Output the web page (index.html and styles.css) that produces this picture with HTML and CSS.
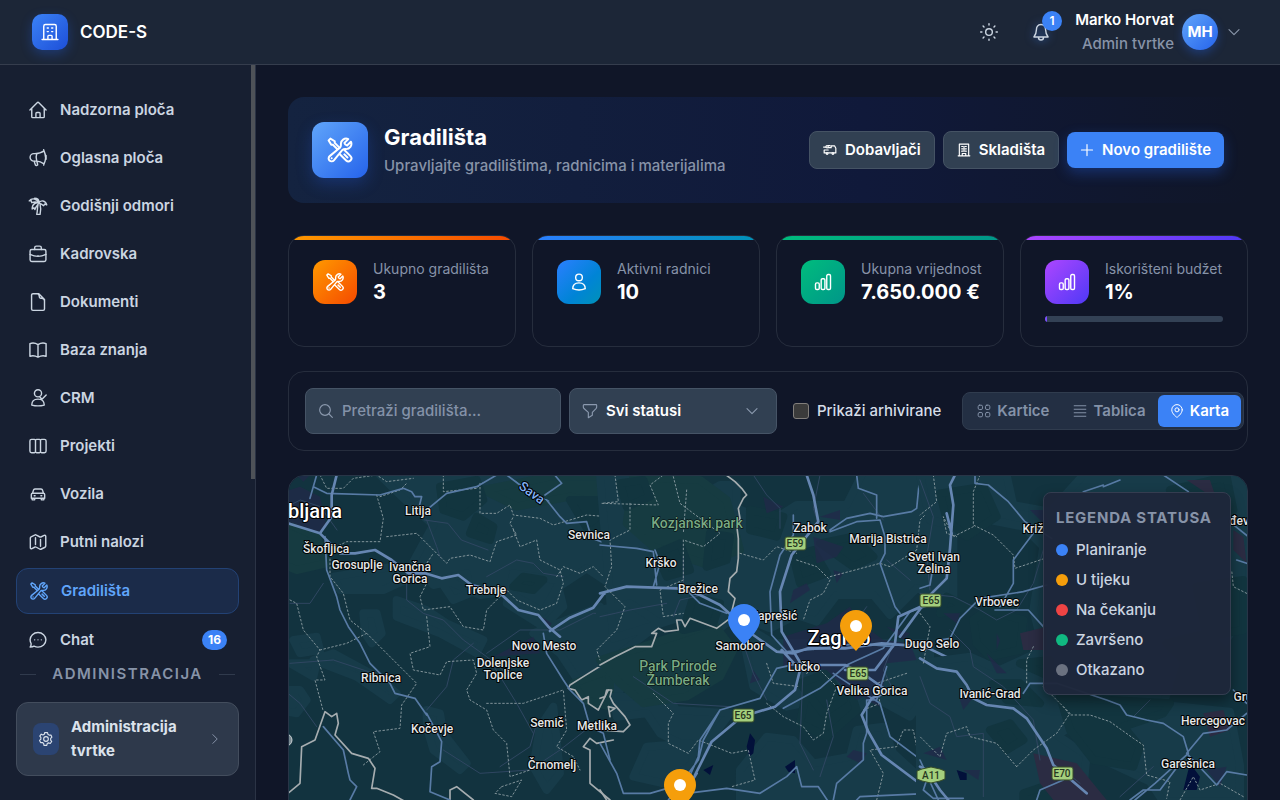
FILE: index.html
```html
<!DOCTYPE html>
<html lang="hr">
<head>
<meta charset="utf-8">
<meta name="viewport" content="width=device-width, initial-scale=1">
<title>CODE-S</title>
<link rel="stylesheet" href="styles.css">
</head>
<body>
<svg class="sprite" aria-hidden="true">
  <symbol id="i-tools" viewBox="0 0 24 24"><path d="M11.42 15.17 17.25 21A2.652 2.652 0 0 0 21 17.25l-5.877-5.877M11.42 15.17l2.496-3.03c.317-.384.74-.626 1.208-.766M11.42 15.17l-4.655 5.653a2.548 2.548 0 1 1-3.586-3.586l6.837-5.63m5.108-.233c.55-.164 1.163-.188 1.743-.14a4.5 4.5 0 0 0 4.486-6.336l-3.276 3.277a3.004 3.004 0 0 1-2.25-2.25l3.276-3.276a4.5 4.5 0 0 0-6.336 4.486c.091 1.076-.071 2.264-.904 2.95l-.102.085m-1.745 1.437L5.909 7.5H4.5L2.25 3.75l1.5-1.5L7.5 4.5v1.409l4.26 4.26m-1.745 1.437 1.745-1.437m6.615 8.206L15.75 15.75M4.867 19.125h.008v.008h-.008v-.008Z"/></symbol>
  <symbol id="i-bars" viewBox="0 0 24 24"><path d="M3 14.6c0-.9.7-1.6 1.6-1.6h1.3c.9 0 1.6.7 1.6 1.6v4.8c0 .9-.7 1.6-1.6 1.6H4.600C3.700 21 3 20.300 3 19.400zM9.800 9.600c0-.9.7-1.600 1.600-1.600h1.300c.9 0 1.600.7 1.600 1.600v9.800c0 .9-.7 1.600-1.600 1.600h-1.300c-.9 0-1.600-.7-1.600-1.600zM16.500 4.600c0-.9.7-1.600 1.600-1.600h1.300c.9 0 1.600.7 1.600 1.600v14.800c0 .9-.7 1.600-1.600 1.600h-1.300c-.9 0-1.600-.7-1.600-1.600z"/></symbol>
  <symbol id="i-down" viewBox="0 0 24 24"><path d="m4.500 8.300 7.500 7.500 7.500-7.500"/></symbol>
  <symbol id="i-building" viewBox="0 0 24 24"><path d="M2.500 21h19M4.500 21V5a2 2 0 0 1 2-2h11a2 2 0 0 1 2 2v16M9.500 21v-4a1 1 0 0 1 1-1h3a1 1 0 0 1 1 1v4M8.700 7.200h1.300M14 7.200h1.300M8.700 11.500h1.300M14 11.500h1.300"/></symbol>
</svg>

<header class="topbar">
  <a class="brand" href="#"><span class="brand-mark"><svg class="icon"><use href="#i-building"/></svg></span>CODE-S</a>
  <div class="top-actions">
    <button class="bare" aria-label="Promijeni temu"><svg class="icon" viewBox="0 0 24 24"><circle cx="12" cy="12" r="4"/><path d="M12 2v1.500M12 20.500V22M2 12h1.500M20.500 12H22M4.900 4.900 6 6M18 18l1.100 1.100M4.900 19.100 6 18M18 6l1.100-1.100"/></svg></button>
    <button class="bare bell" aria-label="Obavijesti"><svg class="icon" viewBox="0 0 24 24"><path d="M12 3c-4 0-5.500 3-5.500 6.300 0 4.500-1.200 6.200-3 8.700h17c-1.800-2.500-3-4.200-3-8.700C17.500 6 16 3 12 3zM9 18.500a3 3 0 0 0 6 0"/></svg><span class="bell-count">1</span></button>
    <button class="profile"><span class="who"><strong>Marko Horvat</strong><span>Admin tvrtke</span></span><span class="avatar">MH</span><svg class="icon chev"><use href="#i-down"/></svg></button>
  </div>
</header>

<div class="shell">
  <aside class="sidebar">
    <nav class="nav" aria-label="Glavni izbornik">
      <a href="#"><svg class="icon" viewBox="0 0 24 24"><path d="M2.300 12 11 3.200a1.400 1.400 0 0 1 2 0L21.700 12M4.500 9.800V20c0 .6.5 1.100 1.100 1.100h12.800c.6 0 1.100-.5 1.100-1.100V9.800M9.500 21v-4.900c0-.6.5-1.100 1.100-1.100h2.800c.6 0 1.100.5 1.100 1.100V21"/></svg>Nadzorna ploča</a>
      <a href="#"><svg class="icon" viewBox="0 0 24 24"><path d="M10.500 15.800c-.8-.1-1.500-.1-2.300-.1H7a4.500 4.500 0 0 1 0-9h1.200c4 0 8-1 11-3.200 2.300 5 2.300 11 0 15.500-2.800-1.800-5.800-3-8.700-3.200zM10.500 6.700c-1 3-1 6.200 0 9.100M7.500 15.700c.3 1.800.8 3.400 1.500 4.900.6 1 2.900.2 2.600-1-.4-1.300-.8-2.500-1-3.800M19.200 3.500 18.800 2M19.200 19l-.4 1.500M21.700 9v4.500"/></svg>Oglasna ploča</a>
      <a href="#"><svg class="icon" viewBox="0 0 24 24"><path d="M13 8.500c-2-5-8-7-11.500-2.700l2.300-.3.700 2.500c3-1 6-1 8.500.5zM13 8.500C10 7.500 5 9 5 15.500l2.200-1.300 1 2C9 13.500 11 11 13 8.500zM13 8.500c2-4 8-3.500 9.500 2.200l-2.500-1-1.200 2C17 10 15 9 13 8.500zM13 8.500c1-4-2-6-5-6M12 10.500c-1 3.500-.3 7-1.500 11.500h4c1-4.500 1-8.500 0-12"/></svg>Godišnji odmori</a>
      <a href="#"><svg class="icon" viewBox="0 0 24 24"><rect x="2.500" y="6.500" width="19" height="14.500" rx="2"/><path d="M8 6.500v-2a2 2 0 0 1 2-2h4a2 2 0 0 1 2 2v2M2.500 12.500c6 3 13 3 19 0M12 14h.01"/></svg>Kadrovska</a>
      <a href="#"><svg class="icon" viewBox="0 0 24 24"><path d="M19.800 11V9L13 2H6a1.700 1.700 0 0 0-1.700 1.700v16.600A1.700 1.700 0 0 0 6 22h12.100a1.700 1.700 0 0 0 1.700-1.700V11a3.500 3.500 0 0 0-3.500-3.500h-1a1.700 1.700 0 0 1-1.700-1.700v-.5A3.500 3.500 0 0 0 11 2"/></svg>Dokumenti</a>
      <a href="#"><svg class="icon" viewBox="0 0 24 24"><path d="M12 5.500C9 3.600 5.500 3.200 2.300 4.300v15.200c3.200-1.100 6.700-.6 9.700 1.200 3-1.800 6.500-2.300 9.700-1.200V4.300C18.500 3.200 15 3.600 12 5.500zm0 0v15"/></svg>Baza znanja</a>
      <a href="#"><svg class="icon" viewBox="0 0 24 24"><circle cx="12" cy="6.300" r="4.300"/><path d="M4.500 20.500C4.500 16 7.500 13.300 12 13.300s7.500 2.700 7.500 7.200c-5 1.300-10 1.300-15 0zM14.500 11l2.300 2.500 5-5"/></svg>CRM</a>
      <a href="#"><svg class="icon" viewBox="0 0 24 24"><path d="M4.300 4h3.400q1.300 0 1.300 1.300v13.400Q9 20 7.700 20H4.300q-2 0-2-2V6q0-2 2-2zM10.300 4h3.400Q15 4 15 5.300v13.400q0 1.300-1.300 1.300h-3.400Q9 20 9 18.700V5.300Q9 4 10.300 4zM16.300 4h3.400q2 0 2 2v12q0 2-2 2h-3.400Q15 20 15 18.700V5.300Q15 4 16.300 4z"/></svg>Projekti</a>
      <a href="#"><svg class="icon" viewBox="0 0 24 24"><path d="m5.500 11 1-3.500A2 2 0 0 1 8.400 6h7.200a2 2 0 0 1 1.900 1.500l1 3.500M5.500 11h13a1.500 1.500 0 0 1 1.500 1.500V17H4v-4.500A1.500 1.500 0 0 1 5.500 11zM5 17v2h3v-2M16 17v2h3v-2M7.500 14h1M15.500 14h1"/></svg>Vozila</a>
      <a href="#"><svg class="icon" viewBox="0 0 24 24"><path d="M9 6.800V15M15 9v8.200M15.500 20.700l4.900-2.400c.6-.3.900-.8.900-1.400V5.200c0-1-1-1.600-1.900-1.200l-4 2c-.3.200-.7.200-1 0L9.500 3.500c-.3-.2-.7-.2-1 0L3.700 5.800c-.6.300-.9.800-.9 1.400v11.600c0 1 1 1.600 1.900 1.200l3.800-2c.3-.2.7-.2 1 0l5 2.700c.3.100.7.100 1 0z"/></svg>Putni nalozi</a>
      <a href="#" class="active" aria-current="page"><svg class="icon"><use href="#i-tools"/></svg>Gradilišta</a>
      <a href="#"><svg class="icon" viewBox="0 0 24 24"><path d="M8 11.800h.01M12 11.800h.01M16 11.800h.01M12 3c5.200 0 9.500 4 9.500 8.800s-4.300 8.700-9.500 8.700c-1.700 0-3.300-.4-4.700-1.100-1.400.9-3 1.100-4.800 1.100 1-1.200 1.400-2.500 1.300-4C3 15 2.500 13.400 2.500 11.800 2.500 7 6.800 3 12 3z"/></svg>Chat<span class="count">16</span></a>
    </nav>
    <h2 class="side-title">ADMINISTRACIJA</h2>
    <button class="admin-card"><span class="admin-mark"><svg class="icon" viewBox="0 0 24 24"><path d="m10 2.500-.6 2.400-2 1.100-2.500-1.300-2.200 3 1.600 2v2.600l-1.900 1.800 1.500 3.300 2.700-.1 1.900 1.500.4 2.700h4.300l.6-2.600 2-1.100 2.600 1 2.200-3-1.600-2.100v-2.500l1.900-1.900L19.400 6l-2.700.2-1.900-1.400-.5-2.300z"/><circle cx="12" cy="12" r="3.500"/></svg></span><span class="admin-text">Administracija tvrtke</span><svg class="icon chev-r" viewBox="0 0 24 24"><path d="m8.300 4.500 7.500 7.500-7.500 7.500"/></svg></button>
    <span class="thumb"></span>
  </aside>

  <main class="main">
    <section class="hero">
      <span class="hero-mark"><svg class="icon"><use href="#i-tools"/></svg></span>
      <div class="hero-text"><h1>Gradilišta</h1><p>Upravljajte gradilištima, radnicima i materijalima</p></div>
      <div class="hero-actions">
        <button class="btn"><svg class="icon" viewBox="0 0 24 24"><path d="M9 8h5V5h6l2 4v3M2 12v5h3M9 17h6M19 17h3v-5M2 12h7M1 7h4M9 4.500h3"/><circle cx="7" cy="18" r="1.500"/><circle cx="17" cy="18" r="1.500"/><circle cx="7" cy="6.500" r="2"/></svg>Dobavljači</button>
        <button class="btn"><svg class="icon" viewBox="0 0 24 24"><path d="M2 22h20M4 22V2h16v20M9 22v-4h6v4M8 6h2M8 10h2M8 14h2M14 6h2M14 10h2M14 14h2M12 6v8"/></svg>Skladišta</button>
        <button class="btn primary"><svg class="icon" viewBox="0 0 24 24"><path d="M12 2.500v19M2.500 12h19"/></svg>Novo gradilište</button>
      </div>
    </section>

    <section class="stats">
      <article class="stat orange"><span class="stat-mark"><svg class="icon"><use href="#i-tools"/></svg></span><div><p>Ukupno gradilišta</p><strong>3</strong></div></article>
      <article class="stat blue"><span class="stat-mark"><svg class="icon" viewBox="0 0 24 24"><circle cx="12" cy="6.500" r="4"/><path d="M4.500 20c0-4.500 3.200-7 7.500-7s7.500 2.500 7.500 7c-4.500 2-10.500 2-15 0z"/></svg></span><div><p>Aktivni radnici</p><strong>10</strong></div></article>
      <article class="stat green"><span class="stat-mark"><svg class="icon"><use href="#i-bars"/></svg></span><div><p>Ukupna vrijednost</p><strong>7.650.000 €</strong></div></article>
      <article class="stat purple"><span class="stat-mark"><svg class="icon"><use href="#i-bars"/></svg></span><div><p>Iskorišteni budžet</p><strong>1%</strong></div><div class="meter"><span style="width:1%"></span></div></article>
    </section>

    <section class="filters">
      <label class="field search"><svg class="icon" viewBox="0 0 24 24"><circle cx="10.500" cy="10.500" r="8"/><path d="m16.500 16.500 5 5"/></svg><input type="search" placeholder="Pretraži gradilišta..." aria-label="Pretraži gradilišta"></label>
      <label class="field status"><svg class="icon" viewBox="0 0 24 24"><path d="M3 2.500h18a1 1 0 0 1 1 1V6c0 1-.4 1.600-1 2.300L15.500 14v4.500l-6 3.500v-8L3 8.300C2.400 7.600 2 7 2 6V3.500a1 1 0 0 1 1-1z"/></svg><select aria-label="Status"><option>Svi statusi</option><option>Planiranje</option><option>U tijeku</option></select><svg class="icon"><use href="#i-down"/></svg></label>
      <label class="check"><input type="checkbox">Prikaži arhivirane</label>
      <div class="views">
        <button><svg class="icon" viewBox="0 0 24 24"><rect x="2" y="2" width="7.500" height="7.500" rx="2.500"/><rect x="14.500" y="2" width="7.500" height="7.500" rx="2.500"/><rect x="2" y="14.500" width="7.500" height="7.500" rx="2.500"/><rect x="14.500" y="14.500" width="7.500" height="7.500" rx="2.500"/></svg>Kartice</button>
        <button><svg class="icon" viewBox="0 0 24 24"><path d="M2 3h20M2 9h20M2 15h20M2 21h20"/></svg>Tablica</button>
        <button class="on" aria-pressed="true"><svg class="icon" viewBox="0 0 24 24"><circle cx="12" cy="10" r="3.500"/><path d="M21 10c0 7-9 13-9 13S3 17 3 10a9 9 0 0 1 18 0z"/></svg>Karta</button>
      </div>
    </section>

    <section class="map" aria-label="Karta gradilišta">
      <svg class="map-canvas" viewBox="289 476 958 478" preserveAspectRatio="xMidYMin slice" role="img" aria-label="Karta">
        <rect class="land" x="289" y="476" width="958" height="478"/>
        <g transform="translate(280 470) scale(.33333)">
          <path class="lite" d="M300 15h760v260l-80 60-60-40-90 60-40 70-110-60-80 10-90-40-50 10-60-70 60-110-100-90zM160 320l180-30 60 30-90 40-130 0zM480 330l80-20 10 60-50 20zM250 430l40 0 15 60-30 30-20-30zM350 390l90 30 60 40 110 50-20 40-110-60-130-50zM700 310l130 20 20 80-60 60-110-70zM760 490l200-80 60 70v180l-120-20-60-90zM0 660l60 0 20 30-30 40-50-10zM100 570l60-20 130 70 60 50-20 20-100-70zM440 720l40 10 10 60 70 90-20 20-80-60-20-70zM780 770l40-60 20 200-40 50-40-70zM30 580l80 0-10 40zM40 510l70-10 10 40-60 10z"/>
          <path class="green" d="M0 150l110 50 30 80-90 20-50-20zM610 60l200-40 180 0 0 90-120-30-160 30zM880 640l110-40v110l-80-20z"/>
          <path class="urban" d="M0 70l60-20 60 30 20 90-30 20-70-30-40 10zM785 440l30 20-10 20zM640 560l120-60 20 50zM50 15l40 0-20 20z"/>
          <path class="dark" d="M480 50l110-20 20 60-60 50-60-20zM590 140l50 30-10 40-60-20zM870 90l90 0 30 50-60 50zM700 350l30-30 60 10-30 30z"/>
          <path class="minor" d="M434 150l70 10 40 50 80 30M440 150l30 80 10 30M380 310v80l50 40 60 20 60 60 70 50 60 50M620 320l90-50 50 10 30 30 60 10M30 580l130-10 120 40M0 650l60 50 50 70M440 720l60-70 20-80 60-50M620 550l100-70 120 0 100-50 50 0M630 570l80 130 50 90M490 840l110 70 150-10 90-60 90-70M660 890l90-60 20-70M30 400h60l40-60M1 120l60-30 60 20 50 70"/>
          <path class="bound" d="M120 15l20 40 50 0 30-30 70-10 30 20 80-10M290 75l20 70-10 70-100 0-40 20M300 80l60-20 20-20M320 200l90-10 60 60 30 30 10-15 60-10 60 20 20-60 60-20-20-35 10-20M490 15v50l100-10 20-20M600 40v90l50 0 40-25 10 30 80 10 40 20 100-30 60 5M700 180l20 50 50-20 10 60 60 30 10 40-20 60-50 20-70-30-30-30-60 60-10 60-60-10-40-60-80 10-10-40 20-40 0-60 20-30M440 440l10 90-60 20 10 50 80 15 20-40 80-5 10 40-30 50 10 30 50 30 20 60 40 40 10 100 60-20M30 390l20 10 20 80 50 60-10 20 25 70-30 0 25 95M120 540l80-20 60-30-50-40-20-80-40-50 0-60M260 490l90 90 60 60-45 65-5 70-80 10 20 60-50 40M620 700l110 0 120-40 10 120-30 50 50 30 20 40M830 320l20-30 50 20 40-20 30 30M665 950l60-20-30 50-50-10z"/>
          <path class="border" d="M0 990l60-50 5-110 40-20 30-85 20 15 15-10 5 30-10 35 50 55 50 15 20 30-10 60 15 0 50 20 90 50M510 990v-30l20-10 50 40M990 990l-60-50 0-100-20-10 20-25 20 15 50-10M990 570l-80 50-40 25-5 10 20 5 20 30 20-10 0 20 30 20 30-60"/>
          <path class="road" d="M110 15l-20 70M440 120l60-50 90-20 60-35M100 50l40 20 160 5 70-20 25 10 10 15 20 0-10 40M795 75l50-35-25-30M440 730l45 85-5 60-25 15-5 75 60 25M135 200l5 100 30 80 10 40 25 50 35 50 30 60 60 60 15 30 60 15 35 50M790 490l10 60 50 80 20 30 40 40 20 70 40 20 20 80M130 770l60 70 15 70 5 20 20 20-20 40M800 90l40 50 20 20 60-5 15 50 55 20M680 15l40 30"/>
          <path class="motor" d="M25 160l95 30 60 60 45 0 60-10 50 30 50 40 50 0 50 15 50-10 40 30 80 20 60 55 60 15 30 35 35 30M810 483l60-40 70-30 30-40 30-15M170 15l-15 60 0 65-35 50"/>
        </g>
        <g transform="translate(600 470) scale(.33333)">
          <path class="lite" d="M0 15h180l80 90 100-60 50 0 0 70 100 40 80-50 150 0 50-100h270v380l-110-30-80 80-50-60-110 0-60 80-60-20-80 40-100-40-100 80-80-70-190 60zM0 420l90-20 90 60-80 60-80 60-20 0zM420 460l100 60 200 0 270 0v140l-60 80-110-60-80 60-80-50-100 20-100-60zM40 680l160 0 30 40 160 10-90 120-120-60-40-60-90 10zM140 830l130-10 10 60-90 60-90-20zM420 900l80-100 80 10 60 70 110-20 20-80 80-10 30 80 110 100v40H420z"/>
          <path class="green" d="M100 20l200 10 80 60 40 150-110 40-150-50-80-70zM0 570l130-40 210-70 60 80-40 80-100 60-130 20-70-60z"/>
          <path class="dark" d="M60 40l70-10 20 50-70 30zM450 120l100 20-20 60-80-20zM660 220l100-20 60 60-60 30zM280 380l80 20-20 60-90 20zM580 260l60-20 40 70-80 30zM620 660l130 0 20 60-90 80-80-40zM170 250l70-30 30 80-70 20zM330 190l60 10-10 70-60 20zM600 640l80-30 50 80-60 40z"/>
          <path class="urban" d="M550 500l130-40 70-50 20 40 80 60 80 10 20 50-90 10-10 70-80 40-90-90-130-10zM640 200l90 30-20 30-60 20zM490 80l60 30-50 20zM700 300l30 10-20 30zM580 360l40-20 10 20-60 40zM760 640l60 10 20 60-40-20zM740 860l20-20 40 10-20 30zM860 470l70 20-20 20zM660 140l60-20 0 30zM460 600l20 30-30 10z"/>
          <path class="water" d="M440 830l10-40 15 20-5 40-12 10zM555 890l30-20 0 40-20-5zM310 900l30-15-10 30z"/>
          <path class="minor" d="M460 15l40 60 40 40 0 60M660 15l-20 100 20 60M0 440l90-20 110-20M420 490l40 120 40 80M100 620l120 80 170 10M640 540l110-60 50-70M610 580l-10 240 40 80M680 690l20 110-40 120M790 70l60 80M860 270l70 60M880 520l-30 80 30 60M250 260l0 100M220 440l20-50 90-20"/>
          <path class="bound" d="M45 15l10 80-50 5 170 5-25-60 40-30M90 100l0 80-60 30 5 80-20 60 60 60-25 70-60 60 10 30M260 60l-10 130M220 20l20 80 120 90-50 40-60-20 0 120-70 30 10 80 60-10M420 250l70 20 40-40 60 20M590 270l60 20 40 40-20 40-40 20-20 60M500 700l50 40 60 30 30 40 30-20 10-60 30-80-60-60-30 20M990 120l-30 30-10 90-80 50-30-10-150 40M160 670l60 60-15 30 0 60 60 30 30-40 100 40 50-10 20 90-70 20M920 610l-90 30 10 60-50 20M830 990l20-80-40-70 80-10 20-50 30 0 10 50 40 0M500 580l20 60 80 10"/>
          <path class="border" d="M0 585l45-25 60-30 50 0 15-40-15 0 20-15 20 10 40-5-5-30 15 0 10 20 15-25 80 30 40-30 15-60-20-20 5-40 20-20 5-40 0-60-5-40 10-20-5-30 15-30 10-10-15-20-20-20-40-30-40-10-10-30-20-20 0-20M0 685l15-5 5-20 15 0-5 20 10 20 35 40 15 25-20 20-70-5M30 740l-5-30 20 5-15 10M0 960l20 30"/>
          <path class="road" d="M770 15l5 40 55 20 0 70M690 180l50-35 70-15 40 10 85-15 15-10 10-100M690 185l80-30 70-5 15 50 0 50-15 30 45 130 15 20M170 345l-10-100-50-10-110-10M165 240l15 40-20 70M990 405l-60 20-80 110-110 50-80 70-110 60M360 720l-60 90-5 50-40 90M240 340l60 60 80 30M0 820l50 90 20 60 80 0 70-20 40 20 120-15 100 15 80-50 30-30 15 60 50 0 40 60M620 575l-90 20-50 90-120 35-50 90-15 60-90 120M880 530l-110-10-100 15-110 10-45-50-5-130 30-110 40-60 0-60M860 590l-30 100-30 0 0 100-10 30 0 50-80 70-10 50M990 890l-120-90-30-100-80-50-60-40M770 990l10-10 210-10"/>
          <path class="motor" d="M0 370l80-20 150 5 70 20 60 30 100 90 70 50 50 5 45-15 110 0 110-15 130 10 115 55M900 500l80-110M620 15l20 60 15 80-80 100-35 110 5 120 60 100 130 0 60 30 70 50-50 20-30 50 20 50 40 70 120 90 45 80M285 915l50-100 90-75 100-30 60-50 15-60-55-60M735 600l90 0 60-80 10-80 90-40M240 990l50-80"/>
        </g>
        <g transform="translate(920 470) scale(.33333)">
          <path class="lite" d="M0 15h260l20 90 110 20 100-110h500v380l-80 130-120-20-60 200 200 20 30 160v110H730l-40-60-150-70-60-110-70 40 90 60-20 200h110v50H0V580l150-20 90 40 130-60-30-120 30-190-60-60-100-20-60 30-120-30z"/>
          <path class="dark" d="M60 70l130-20 40 90-90 60-60-50zM160 450l40-30 110 30-10 90-90 20-40-40zM420 680l150 10 180 10-20 30-120 40 50 60-20 60-120-20-70-90zM750 60l170-40 20 100-100 30zM830 350l140-20v150l-110 20zM740 520l120-30 60 60-110 40zM220 640l80 0 60 60-100-10zM300 580l90-10 0 50zM80 380l60 30-80 20zM210 780l60-20 40 50-50 30zM310 970l60-20 80 40H310z"/>
          <path class="urban2" d="M300 490l80-20v70l-70 0zM340 850l130 30 90 110H400l-40-50zM850 730l60-10 20 60-60 20zM800 30l70 0 20 60zM940 180l30 20 10 80-40-40z"/>
          <path class="urban" d="M70 430l50 0-10 30zM120 690l50-20-40 50zM200 550l60 60-30 0zM230 490l10 20-10 30zM10 850l50-20 20 40zM860 900l60-10-20 60zM130 900l50 0-5 30zM330 120l40 40 20 0-20-40z"/>
          <path class="water" d="M110 900l30 10 0 20-20 0zM810 880l30 40-10 40-40 0z"/>
          <path class="minor" d="M0 30l40 110-20 120 10 100M0 370l100 10 80 40 50 30 60-30 50-80 30-100M90 480l60 60 10 50 90 60 90 100 20 120M0 620l30 80 60 40 20 60 80-10 0 190M640 740l50-50M600 980l100-90M430 900l50 40"/>
          <path class="bound" d="M40 15l10 80-50 40M180 15l-20 50 0 100 60 30 60 60 5 40 90-30M160 170l-60 30-30-60 10 50 30 10M0 430l30 40-20 110M340 530l-20 40 0 70M370 650l60 60 20 25 60 0 60 20 70 50 30 20 10 90 70 20-10 50M290 890l-60-70-80-20-10-30-60 20-20 70-60-60M290 890l50-50 70-50 40-60-20-20M980 370l-40-20-5-50M780 990l40-70 20 40 60-20 70 40"/>
          <path class="road" d="M165 15l0 25 40 5 60 50 50 60 80 50M550 50l50-20M490 65l60-20M730 15l75 50M935 160l50 40M60 510l30-5 30-60 60-60 130-20 70-20M240 410l40-70 0-70 60-80M225 420l100 0 45 50M310 670l20-30 80 0 150 50 40 15 20 30 60 15 50 10 60 40 15 50-100 90-60 50M800 850l50-60 70-10 60-50M800 850l90 95 30-40 60 10M630 990l40-30 50 0 60-80M350 990l10-30 70-30M940 660l40 40M0 870l55 120M30 900l-20 60 30 25 90 0M980 280l-30-10M0 355l30-10 10-60"/>
          <path class="motor" d="M105 15l-15 30 10 60-10 130-10 90-60 60M0 565l50 30 60 10 30 40 20 40 40 20 80 10 40 30 60 90 20 50 30 25 70 60M0 890l20 10 40 60 25 30M80 130l15 60"/>
        </g>
        <path class="river" d="M515 481q18 14 34 20"/>
        <text class="river-name" transform="translate(518 488) rotate(36)">Sava</text>
        <g class="city">
          <text x="315" y="518">bljana</text><text x="839" y="645">Zagreb</text>
        </g>
        <g class="town">
          <text x="418" y="515">Litija</text><text x="326" y="553">Škofljica</text><text x="357" y="569">Grosuplje</text>
          <text x="410" y="571">Ivančna</text><text x="410" y="583">Gorica</text><text x="486" y="594">Trebnje</text>
          <text x="589" y="539">Sevnica</text><text x="661" y="567">Krško</text><text x="698" y="593">Brežice</text>
          <text x="544" y="650">Novo Mesto</text><text x="503" y="667">Dolenjske</text><text x="503" y="679">Toplice</text>
          <text x="381" y="682">Ribnica</text><text x="432" y="733">Kočevje</text><text x="547" y="727">Semič</text>
          <text x="597" y="730">Metlika</text><text x="552" y="769">Črnomelj</text><text x="740" y="650">Samobor</text>
          <text x="774" y="620">Zaprešić</text><text x="804" y="671">Lučko</text><text x="810" y="532">Zabok</text>
          <text x="888" y="543">Marija Bistrica</text><text x="934" y="561">Sveti Ivan</text><text x="934" y="573">Zelina</text>
          <text x="872" y="695">Velika Gorica</text><text x="932" y="648">Dugo Selo</text><text x="997" y="606">Vrbovec</text>
          <text x="990" y="698">Ivanić-Grad</text><text x="1033" y="533">Križ</text><text x="1239" y="525">đev</text>
          <text x="1243" y="701">Gru</text><text x="1213" y="725">Hercegovac</text><text x="1188" y="768">Garešnica</text>
        </g>
        <g class="park"><text x="697" y="528">Kozjanski park</text><text x="678" y="671">Park Prirode</text><text x="678" y="685">Žumberak</text></g>
        <g class="shield">
          <rect x="785" y="537" width="21" height="13" rx="2"/><text x="795" y="547">E59</text>
          <rect x="847" y="667" width="21" height="13" rx="2"/><text x="858" y="677">E65</text>
          <rect x="733" y="709" width="21" height="13" rx="2"/><text x="743" y="719">E65</text>
          <rect x="920" y="594" width="21" height="13" rx="2"/><text x="931" y="604">E65</text>
          <rect x="1052" y="767" width="21" height="13" rx="2"/><text x="1062" y="777">E70</text>
          <path d="M922 769l9-2 9 2 5 2v8l-5 2-9 2-9-2-5-2v-8z"/><text x="931" y="779">A11</text>
        </g>
        <circle cx="286" cy="740" r="6" fill="#7b8b93" stroke="#c9d0d3"/>
        <path class="pin-blue" d="M744 604a16 16 0 0 1 16 16c0 9-9 17-16 25-7-8-16-16-16-25a16 16 0 0 1 16-16z"/><circle cx="744" cy="620" r="6" fill="#fff"/>
        <path class="pin-orange" d="M856 610a16 16 0 0 1 16 16c0 9-9 17-16 25-7-8-16-16-16-25a16 16 0 0 1 16-16z"/><circle cx="856" cy="626" r="6" fill="#fff"/>
        <path class="pin-orange" d="M680 769a16 16 0 0 1 16 16c0 9-9 17-16 25-7-8-16-16-16-25a16 16 0 0 1 16-16z"/><circle cx="680" cy="785" r="6" fill="#fff"/>
      </svg>
      <div class="legend">
        <h3>LEGENDA STATUSA</h3>
        <ul><li class="planned">Planiranje</li><li class="active-state">U tijeku</li><li class="waiting">Na čekanju</li><li class="done">Završeno</li><li class="cancelled">Otkazano</li></ul>
      </div>
    </section>
  </main>
</div>
</body>
</html>
```
FILE: styles.css
```css
* { box-sizing: border-box; }
body { margin: 0; height: 100vh; display: flex; flex-direction: column; overflow: hidden; background: #101628; color: #fff; font: 500 15px/24px Inter, "Noto Sans", sans-serif; }
h1, h2, h3, p, ul { margin: 0; padding: 0; }
a { color: inherit; text-decoration: none; }
button, input, select { font: inherit; color: inherit; margin: 0; }
button { cursor: pointer; }
.sprite { position: absolute; width: 0; height: 0; }
.icon { width: 20px; height: 20px; flex: none; fill: none; stroke: currentColor; stroke-width: 1.7; stroke-linecap: round; stroke-linejoin: round; }

.topbar { flex: none; display: flex; align-items: center; justify-content: space-between; height: 65px; padding: 0 38px 0 32px; background: #1c2637; border-bottom: 1px solid #353d4d; }
.brand { display: flex; align-items: center; gap: 12px; font-size: 17px; font-weight: 600; }
.brand-mark { display: grid; place-items: center; width: 36px; height: 36px; border-radius: 10px; background: linear-gradient(135deg, #3b82f6, #1d4fd8); box-shadow: 0 4px 12px #2563eb55; }
.top-actions { display: flex; align-items: center; }
.bare { position: relative; display: grid; place-items: center; width: 36px; height: 36px; padding: 0; border: 0; background: none; color: #cbd5e1; }
.bell { margin: 0 16px; }
.bell .icon { filter: drop-shadow(0 0 4px #3b82f6aa); }
.bell-count { position: absolute; top: -3px; right: -3px; width: 20px; height: 20px; border-radius: 10px; background: #3b82f6; color: #fff; font-size: 12px; line-height: 20px; font-weight: 600; }
.profile { display: flex; align-items: center; gap: 8px; padding: 0; border: 0; background: none; text-align: right; }
.who { display: grid; }
.who strong { font-weight: 600; }
.who span { color: #8793a8; }
.avatar { display: grid; place-items: center; width: 36px; height: 36px; border-radius: 50%; background: linear-gradient(135deg, #60a5fa, #2563eb); box-shadow: 0 4px 10px #2563eb55; font-weight: 700; }
.chev { width: 16px; height: 16px; color: #8b97aa; }

.shell { flex: 1; min-height: 0; display: flex; }
.sidebar { position: relative; flex: none; width: 256px; padding: 23px 16px; background: #171f31; border-right: 1px solid #2b3345; overflow: hidden; color: #cbd5e1; }
.thumb { position: absolute; top: 0; right: 0; width: 4px; height: 414px; background: #4e5258; }
.nav { display: grid; gap: 4px; }
.nav a { display: flex; align-items: center; gap: 12px; padding: 10px 12px; font-weight: 600; border-radius: 12px; }
.nav .active { border: 1px solid #234275; background: #1b2b49; color: #60a5fa; }
.count { margin-left: auto; padding: 0 6px; border-radius: 10px; background: #3b82f6; color: #fff; font-size: 12px; line-height: 20px; font-weight: 700; }
.side-title { display: flex; align-items: center; justify-content: center; gap: 16px; color: #8793a8; font-size: 15px; font-weight: 600; letter-spacing: .1em; }
.side-title::before, .side-title::after { content: ""; width: 16px; height: 1px; background: #303a4c; }
.admin-card { display: flex; align-items: center; gap: 12px; width: 100%; margin-top: 16px; padding: 12px 16px; border: 1px solid #434d5d; border-radius: 12px; background: #2e394b; text-align: left; color: #dbe2eb; font-weight: 700; }
.admin-mark { flex: none; display: grid; place-items: center; width: 26px; height: 32px; border-radius: 8px; background: #2b4472; }
.admin-mark .icon { width: 16px; height: 16px; }
.admin-text { flex: 1; }
.chev-r { width: 14px; height: 14px; color: #8793a8; }

.main { flex: 1; min-width: 0; display: flex; flex-direction: column; gap: 24px; padding: 32px; overflow: hidden; }
.main > * { flex: none; }
.hero { display: flex; align-items: center; gap: 16px; padding: 24px; min-height: 106px; margin-bottom: 8px; border-radius: 16px; background: linear-gradient(90deg, #142340, #10193a 60%, #101628); }
.hero-mark { display: grid; place-items: center; width: 56px; height: 56px; border-radius: 12px; background: linear-gradient(135deg, #60a5fa, #2563eb); box-shadow: 0 6px 16px #2563eb44; }
.hero-mark .icon { width: 28px; height: 28px; }
.hero-text { flex: 1; }
.hero h1 { font-size: 22px; line-height: 32px; font-weight: 700; }
.hero p { color: #8793a8; line-height: 26px; }
.hero-actions { display: flex; align-items: center; gap: 8px; }
.btn { display: flex; align-items: center; gap: 8px; padding: 6px 13px; border: 1px solid #455364; border-radius: 8px; background: #314052; font-weight: 600; white-space: nowrap; }
.btn .icon { width: 14px; height: 14px; stroke-width: 2; }
.primary { border: 0; background: #3b82f6; box-shadow: 0 5px 14px #2563eb55; }

.stats { display: grid; grid-template-columns: repeat(4, 1fr); gap: 16px; }
.stat { position: relative; display: grid; grid-template-columns: auto 1fr; align-content: start; gap: 10px 16px; min-height: 112px; padding: 24px; border: 1px solid #262d3d; border-radius: 16px; overflow: hidden; white-space: nowrap; }
.stat::before { content: ""; position: absolute; top: 0; left: 0; right: 0; height: 4px; background: var(--tone); }
.stat > div { min-width: 0; }
.stat-mark { display: grid; place-items: center; width: 44px; height: 44px; border-radius: 12px; background: var(--tile); }
.stat p { color: #8793a8; font-size: 14px; line-height: 18px; font-weight: 400; }
.stat strong { display: block; font-size: 20px; line-height: 28px; font-weight: 700; }
.orange { --tone: linear-gradient(90deg, #ff9900, #f54a00); --tile: linear-gradient(135deg, #ff9900, #f54a00); }
.blue { --tone: linear-gradient(90deg, #2b7fff, #0092b8); --tile: linear-gradient(135deg, #2b7fff, #0084d6 60%, #0092b8); }
.stat.green { --tone: linear-gradient(90deg, #00bc7d, #009689); --tile: linear-gradient(135deg, #00bc7d, #009689); }
.purple { --tone: linear-gradient(90deg, #ad46ff, #4f39f6); --tile: linear-gradient(135deg, #ad46ff, #4f39f6); }
.meter { grid-column: 1 / -1; height: 6px; border-radius: 3px; background: #334155; overflow: hidden; }
.meter span { display: block; height: 100%; background: #7c4dff; }

.filters { display: flex; align-items: center; gap: 8px; padding: 16px 3px 16px 16px; border: 1px solid #262d3d; border-radius: 16px; }
.field { display: flex; align-items: center; gap: 8px; height: 46px; padding: 0 12px; border: 1px solid #465466; border-radius: 8px; background: #314052; color: #8b99ae; }
.field .icon { width: 16px; height: 16px; }
.search { flex: none; width: 256px; }
.status { flex: none; width: 208px; padding-right: 16px; }
.field input, .field select { flex: 1; min-width: 0; width: 0; padding: 0; border: 0; outline: 0; background: none; appearance: none; color: #fff; }
.field select { font-weight: 600; }
.field input::placeholder { color: #8492a8; opacity: 1; }
.check { display: flex; align-items: center; gap: 8px; margin-left: 8px; color: #d5dde7; white-space: nowrap; }
.check input { appearance: none; width: 16px; height: 16px; border: 1px solid #817e7b; border-radius: 3px; background: #3b3b3b; }
.views { display: flex; margin-left: auto; padding: 2px; border: 1px solid #303c4e; border-radius: 8px; background: #232f43; }
.views button { display: flex; align-items: center; gap: 6px; padding: 4px 12px; border: 0; border-radius: 6px; background: none; color: #8492a8; font-weight: 600; }
.views .icon { width: 14px; height: 14px; }
.views .on { background: #3b82f6; color: #fff; }

.map { position: relative; border: 1px solid #283547; border-radius: 16px; overflow: hidden; }
.map-canvas { display: block; width: 100%; min-height: 478px; }
.land { fill: #12333f; }
.lite, .map .green, .dark { stroke-width: 24; stroke-linejoin: round; }
.lite { fill: #173b49; stroke: #173b49; }
.map .green { fill: #163b41; stroke: #163b41; }
.dark { fill: #12353f; stroke: #12353f; }
.urban { fill: #22294a; opacity: .75; }
.urban2 { fill: #2b2c43; }
.water { fill: #02103a; }
.minor, .bound, .border, .road, .motor, .river { fill: none; stroke-linejoin: round; stroke-linecap: round; }
.minor { stroke: #2f4661; stroke-width: 3; }
.bound { stroke: #82949a; stroke-width: 3; stroke-dasharray: 5 7; }
.border { stroke: #a6adb0; stroke-width: 5; }
.road { stroke: #587ba5; stroke-width: 5; }
.motor { stroke: #6686b2; stroke-width: 8; }
.river { stroke: #527dab; }
.map-canvas text { font-family: Roboto, sans-serif; text-anchor: middle; paint-order: stroke; stroke: #000; stroke-width: 2px; stroke-linejoin: round; }
.map-canvas .river-name { fill: #82b1f5; font-size: 13px; text-anchor: start; }
.town text { fill: #e6e8e9; font-size: 12px; font-weight: 500; }
.city text { fill: #fff; font-size: 20px; font-weight: 500; }
.map-canvas .park text { fill: #79aa84; font-size: 14px; stroke-width: 1px; }
.shield rect, .shield path { fill: #a4cf7d; stroke: #374c28; stroke-width: 1; }
.map-canvas .shield text { fill: #273620; stroke: none; font-size: 10px; font-weight: 500; }
.pin-blue { fill: #3b82f6; }
.pin-orange { fill: #f59e0b; }
.legend { position: absolute; top: 16px; right: 16px; min-width: 188px; padding: 13px 12px 12px; border: 1px solid #343d50; border-radius: 8px; background: #1e273af5; box-shadow: 0 6px 14px #0006; color: #cbd5e1; }
.legend h3 { margin-bottom: 8px; color: #8793a8; font-size: 15px; line-height: 24px; font-weight: 700; letter-spacing: .05em; }
.legend ul { display: grid; gap: 6px; list-style: none; }
.legend li { display: flex; align-items: center; gap: 8px; }
.legend li::before { content: ""; width: 12px; height: 12px; border-radius: 50%; background: var(--dot); }
.planned { --dot: #3b82f6; }
.active-state { --dot: #f59e0b; }
.waiting { --dot: #ef4444; }
.done { --dot: #10b981; }
.cancelled { --dot: #6b7280; }
```
